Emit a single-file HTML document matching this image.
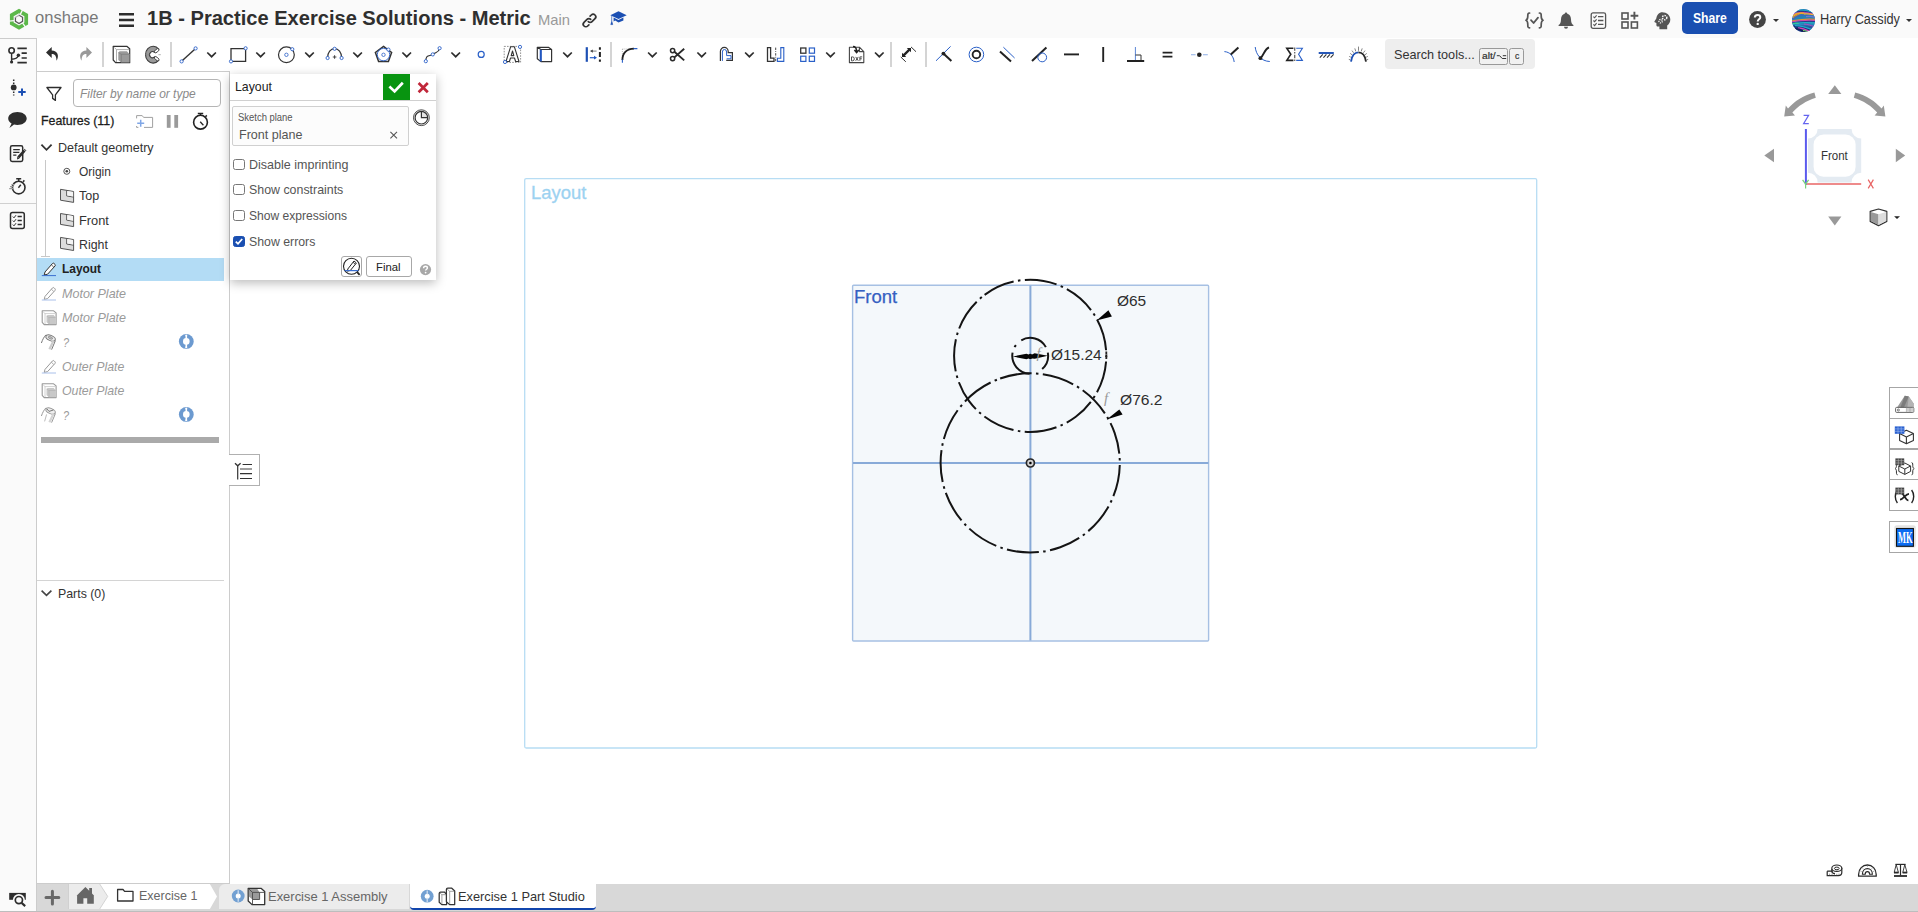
<!DOCTYPE html>
<html><head><meta charset="utf-8"><title>Onshape</title>
<style>
*{box-sizing:border-box;margin:0;padding:0}
html,body{width:1918px;height:912px;overflow:hidden;background:#fff}
body{font-family:"Liberation Sans",sans-serif;position:relative;color:#333}
.a{position:absolute}
.t{position:absolute;white-space:nowrap;transform-origin:0 50%;line-height:1}
svg{position:absolute;overflow:visible}
#hdr{left:0;top:0;width:1918px;height:38px;background:#fafafa}
#tb{left:37px;top:38px;width:1881px;height:34px;background:#fff}
#rail{left:0;top:38px;width:37px;height:874px;background:#fafafa;border-right:1px solid #ccc;border-top:1px solid #ccc}
#panel{left:36px;top:71px;width:194px;height:813px;background:#fff;border:1px solid #ccc}
#bbar{left:37px;top:884px;width:1881px;height:28px;background:#d8d8d8}
#bline{left:0;top:910.5px;width:1918px;height:1.5px;background:#bdbdbd}
.sep{position:absolute;top:42px;width:2px;height:25px;background:#d4d4d4}
#share{left:1682px;top:2px;width:56px;height:32px;background:#1a4fb1;border-radius:5px}
#sbox{left:1385.2px;top:39.2px;width:149.6px;height:29.5px;background:#eee;border-radius:4px}
.key{position:absolute;top:47.6px;height:17.2px;border:1.2px solid #999;border-radius:2.5px;background:#f1f1f1}
#finp{left:73px;top:79px;width:148px;height:28px;border:1px solid #b5b5b5;border-radius:4px;background:#fff}
#selrow{left:37px;top:258px;width:187px;height:23px;background:#b3dcf5}
#gbar{left:41px;top:437px;width:178px;height:6px;background:#aaa}
#phr{left:37px;top:580px;width:187px;height:1px;background:#d4d4d4}
#collapse{left:229px;top:454.2px;width:31px;height:31.6px;background:#fff;border:1px solid #b0b0b0;border-left:none}
#dlg{left:230px;top:73.5px;width:206.4px;height:206px;background:#fff;box-shadow:0 3px 10px rgba(0,0,0,.27)}
#dlghr{left:230px;top:100px;width:206.4px;height:1px;background:#d0d0d0}
#ok{left:383px;top:73.8px;width:27px;height:26.2px;background:#089410}
#skbox{left:232px;top:106px;width:177px;height:40px;border:1px solid #d0d0d0;background:#fcfcfc;border-radius:2px}
.cb{position:absolute;left:233px;width:12px;height:11.4px;border:1px solid #777;border-radius:2.5px;background:#fff}
.btn{position:absolute;top:256px;height:21px;border:1px solid #a8a8a8;border-radius:3px;background:#fff}
#lbox{left:524px;top:178px;width:1013px;height:570px;border:1px solid #b3d8ee}
#fplane{left:852px;top:285px;width:357px;height:357px;border:1px solid #8eb0de;background:#f3f7fb}
#rp1{left:1889px;top:387px;width:32px;height:124px;border:1px solid #a6a6a6;background:#fff}
#rp2{left:1889px;top:520.6px;width:32px;height:32px;border:1px solid #a6a6a6;background:#fff}
.rpd{position:absolute;left:1889px;width:30px;height:1px;background:#a6a6a6}
#tabplus{left:37px;top:884px;width:31px;height:26px;background:#d8d8d8}
#tabhome{left:67.7px;top:884px;width:40px;height:25px;background:#ececec;border-left:1px solid #d0d0d0}
#tab2{left:218.8px;top:884px;width:190.2px;height:25px;background:#ececec;border-radius:6px 0 0 0}
#tab3{left:409.6px;top:884px;width:186.2px;height:26px;background:#fff;border-bottom:2px solid #1145ad;border-radius:0 0 4px 4px}
</style></head>
<body>
<div id="hdr" class="a"></div>
<div id="tb" class="a"></div>
<div id="rail" class="a"></div>
<div class="a" style="left:0;top:203px;width:36px;height:1px;background:#d0d0d0"></div>
<div id="panel" class="a"></div>
<div id="bbar" class="a"></div>
<!-- header -->
<div id="share" class="a"></div>
<div id="sbox" class="a"></div>
<div class="key" style="left:1479px;width:29.4px"></div>
<div class="key" style="left:1509.3px;width:15px"></div>
<!-- onshape logo -->
<svg style="left:0;top:0" width="40" height="38" viewBox="0 0 40 38">
 <polygon points="19.00,8.85 28.09,14.10 28.09,24.60 19.00,29.85 9.91,24.60 9.91,14.10" fill="#5cb84a"/>
 <polygon points="19.00,13.15 24.37,16.25 24.37,22.45 19.00,25.55 13.63,22.45 13.63,16.25" fill="#fafafa"/>
 <g stroke="#fafafa" stroke-width="1.3">
  <path d="M22.6 9.6 L20.2 14.6"/>
  <path d="M22.6 9.6 L20.2 14.6" transform="rotate(120 19.0 19.35)"/>
  <path d="M22.6 9.6 L20.2 14.6" transform="rotate(240 19.0 19.35)"/>
 </g>
 <polygon points="19.00,15.25 22.55,17.30 22.55,21.40 19.00,23.45 15.45,21.40 15.45,17.30" fill="none" stroke="#5a5a5a" stroke-width="1.25"/>
 <path d="M19 15.2 L15.4 17.3" stroke="#fafafa" stroke-width="1.6"/>
 <path d="M15.4 17.4 L19 15.4" stroke="#8a8a8a" stroke-width=".8"/>
</svg>
<!-- hamburger -->
<svg style="left:119px;top:13px" width="15" height="14" viewBox="0 0 15 14"><path d="M0 1.3H15M0 7H15M0 12.7H15" stroke="#2d2d2d" stroke-width="2.5"/></svg>
<!-- link -->
<svg style="left:582px;top:13px" width="15" height="15" viewBox="0 0 15 15" fill="none" stroke="#333" stroke-width="1.7" stroke-linecap="round">
 <path d="M6.3 8.7 a2.6 2.6 0 0 0 3.7 0 l3-3 a2.6 2.6 0 0 0 -3.7 -3.7 l-1.2 1.2"/>
 <path d="M8.7 6.3 a2.6 2.6 0 0 0 -3.7 0 l-3 3 a2.6 2.6 0 0 0 3.7 3.7 l1.2 -1.2"/>
</svg>
<!-- grad cap -->
<svg style="left:610px;top:11px" width="17" height="15" viewBox="0 0 17 15">
 <path d="M8.5 .3 L16.7 4.2 L8.5 8.1 L.3 4.2 Z" fill="#1b4fb3"/>
 <path d="M3.6 6.6 V10.4 L5.2 9.4 L8.5 11.6 L13.4 9.6 V6.6 L8.5 9 Z" fill="#1b4fb3"/>
 <path d="M1.7 5 V10.5 L.8 13.6 H2.7 L1.9 10.5" fill="#1b4fb3" stroke="#1b4fb3" stroke-width=".6"/>
</svg>
<!-- {check} -->
<svg style="left:1525px;top:12px" width="19" height="17" viewBox="0 0 19 17" fill="none" stroke="#555" stroke-width="1.7" stroke-linecap="round" stroke-linejoin="round">
 <path d="M4.6 1 C2.6 1 2.8 2.4 2.8 4 C2.8 6.4 2.6 7.8 .9 8.3 C2.6 8.8 2.8 10.2 2.8 12.6 C2.8 14.4 2.6 15.8 4.6 15.8"/>
 <path d="M14.4 1 C16.4 1 16.2 2.4 16.2 4 C16.2 6.4 16.4 7.8 18.1 8.3 C16.4 8.8 16.2 10.2 16.2 12.6 C16.2 14.4 16.4 15.8 14.4 15.8"/>
 <path d="M6 8.2 L8.6 11 L13 5.6" stroke-width="1.8"/>
</svg>
<!-- bell -->
<svg style="left:1558px;top:12px" width="16" height="17" viewBox="0 0 16 17">
 <path d="M8 .4 C8.8 .4 9.3 1 9.3 1.7 C11.8 2.4 13 4.6 13 7.2 C13 10.4 13.8 11.8 15.4 13.1 V13.9 H.6 V13.1 C2.2 11.8 3 10.4 3 7.2 C3 4.6 4.2 2.4 6.7 1.7 C6.7 1 7.2 .4 8 .4 Z" fill="#555"/>
 <path d="M6 14.8 H10 A2 2 0 0 1 6 14.8Z" fill="#555"/>
</svg>
<!-- checklist -->
<svg style="left:1590px;top:12px" width="17" height="17" viewBox="0 0 17 17" fill="none" stroke="#555" stroke-width="1.3">
 <rect x="1.2" y=".9" width="14.4" height="15.4" rx="1.8"/>
 <path d="M8 4.6H13.4M8 8.5H13.4M8 12.4H13.4" stroke-width="1.4"/>
 <path d="M3.4 4.6L4.6 5.8L6.6 3.4M3.4 8.5L4.6 9.7L6.6 7.3M3.4 12.4L4.6 13.6L6.6 11.2" stroke-width="1.1"/>
</svg>
<!-- grid plus -->
<svg style="left:1621px;top:11px" width="18" height="18" viewBox="0 0 18 18" fill="none" stroke="#555" stroke-width="1.6">
 <rect x="1" y="2" width="6" height="6"/><rect x="1" y="11" width="6" height="6"/><rect x="10.4" y="11" width="6" height="6"/>
 <path d="M13.4 .8V8.6M9.6 4.7H17.3" stroke-width="1.9"/>
</svg>
<!-- head gears -->
<svg style="left:1654px;top:12px" width="17" height="18" viewBox="0 0 17 18">
 <path d="M8.3 .3 C12.8 .3 16.3 3.5 16.3 7.6 C16.3 10.4 14.9 12.3 13.2 13.6 V17.3 H5.4 V14.6 H4 C3 14.6 2.4 14 2.4 13 V11 L.7 10.2 C.3 10 .3 9.6 .5 9.3 L2.3 6.6 C2.7 2.8 5.2 .3 8.3 .3 Z" fill="#555"/>
 <circle cx="10.6" cy="5.6" r="2.2" fill="none" stroke="#fafafa" stroke-width="1.5" stroke-dasharray="1.3 1"/>
 <circle cx="6.6" cy="9.2" r="1.7" fill="none" stroke="#fafafa" stroke-width="1.3" stroke-dasharray="1.1 .9"/>
</svg>
<!-- help -->
<svg style="left:1749px;top:11px" width="17" height="17" viewBox="0 0 17 17"><circle cx="8.5" cy="8.5" r="8.4" fill="#444"/><path d="M5.8 6.6 C5.8 4.9 7 3.9 8.6 3.9 C10.2 3.9 11.3 4.9 11.3 6.3 C11.3 8.3 8.7 8.3 8.7 10.4" fill="none" stroke="#fafafa" stroke-width="2"/><circle cx="8.7" cy="12.9" r="1.2" fill="#fafafa"/></svg>
<svg style="left:1773px;top:19px" width="6" height="3" viewBox="0 0 6 3"><path d="M0 0H6L3 3Z" fill="#333"/></svg>
<svg style="left:1906px;top:19px" width="6" height="3" viewBox="0 0 6 3"><path d="M0 0H6L3 3Z" fill="#333"/></svg>
<!-- avatar -->
<svg style="left:1792px;top:8.9px" width="23" height="23" viewBox="0 0 23 23">
 <defs><clipPath id="avc"><circle cx="11.5" cy="11.5" r="11.5"/></clipPath>
 <linearGradient id="avg" x1="0" y1="0" x2="0" y2="1"><stop offset="0" stop-color="#2d6fb0"/><stop offset=".5" stop-color="#2f7fb6"/><stop offset="1" stop-color="#1c3c8c"/></linearGradient></defs>
 <g clip-path="url(#avc)" fill="none">
  <rect width="23" height="23" fill="url(#avg)"/>
  <path d="M2 2.2 C8 0 14 1 21 3.4" stroke="#1aa0c4" stroke-width="1.6"/>
  <path d="M5 2.8 C10 1.8 15 2.4 20 4.2" stroke="#3a2c7c" stroke-width="1"/>
  <path d="M1 5.2 C7 3 15 3.4 22 5.4" stroke="#d648b4" stroke-width="1.3"/>
  <path d="M0 7.6 C4 4.4 8 3.6 12 4.4" stroke="#f0a828" stroke-width="1.7"/>
  <path d="M12 5 C16 4.6 19 5 22 6" stroke="#f2b830" stroke-width="1.3"/>
  <path d="M0 10 C5 6 12 5.6 23 7.4" stroke="#3e68b8" stroke-width="1.4"/>
  <path d="M1 9 C3 7 5 6 7 5.4" stroke="#e08a2a" stroke-width=".9"/>
  <path d="M4 9.6 C10 7 17 7 23 8.6" stroke="#1f86b8" stroke-width="1.6"/>
  <path d="M14 7.6 C18 7 21 7.6 23 8.4" stroke="#6a78d0" stroke-width="1.2"/>
  <path d="M0 11.8 C7 10.6 15 9.4 23 10.4" stroke="#e09a2c" stroke-width="1.1"/>
  <path d="M0 12.8 C7 11.8 15 10.6 23 11.4" stroke="#d04aa8" stroke-width="1.2"/>
  <path d="M0 14 C7 13 15 11.8 23 12.6" stroke="#2a3a8c" stroke-width="1"/>
  <path d="M0 15.4 C6 12.8 14 13.4 23 14" stroke="#1fb0c8" stroke-width="1.5"/>
  <path d="M1 14.6 C3 14 5 14.2 7 15" stroke="#30c89a" stroke-width="1.5"/>
  <path d="M0 17 C7 14.6 14 15.6 23 16" stroke="#2a88c0" stroke-width="1.5"/>
  <path d="M12 15 C16 15.4 19 16.4 22 17.6" stroke="#b04ac0" stroke-width="1"/>
  <path d="M1 17.6 C6 17 12 19 18 21.6" stroke="#1a2a70" stroke-width="2"/>
  <path d="M3 16.6 C9 16.6 14 18.2 20 20.6" stroke="#1ea8cc" stroke-width="1.3"/>
  <path d="M6 18.8 C10 19 14 20.4 18 22.4" stroke="#d048b8" stroke-width="1.2"/>
  <path d="M3 19.6 C7 20 10 21.4 13 23" stroke="#141c58" stroke-width="1.8"/>
  <path d="M11 21.6 C13 21.6 15 22.2 16 23" stroke="#8ae060" stroke-width="1"/>
 </g>
</svg>

<!-- toolbar separators -->
<div class="sep" style="left:102px"></div>
<div class="sep" style="left:170px"></div>
<div class="sep" style="left:610px"></div>
<div class="sep" style="left:890px"></div>
<div class="sep" style="left:925px"></div>
<!-- toolbar icons: one big svg in page coords -->
<svg style="left:0;top:38px" width="1400" height="34" viewBox="0 38 1400 34">
<defs>
 <path id="chev" d="M.4 .1 L4.7 4.3 L9 .1" fill="none" stroke="#2e2e2e" stroke-width="1.7"/>
 <circle id="bp" r="1.6" fill="#fff" stroke="#2a60c8" stroke-width=".9"/>
</defs>
<!-- undo / redo -->
<path d="M51.7 46.9 L46 52.4 L51.7 57.9 V54.1 C54.6 54.1 56.4 55.4 56.5 60.8 C59.6 55.6 57.6 50.6 51.7 50.4 Z" fill="#2e2e2e"/>
<path d="M86.4 46.9 L92 52.4 L86.4 57.9 V54.1 C83.5 54.1 81.7 55.4 81.6 60.8 C78.5 55.6 80.5 50.6 86.4 50.4 Z" fill="#999"/>
<!-- extrude cube -->
<path d="M113.2 46.3 H126.8 L129.7 48.8 V62.7 H115.6 L113.2 60 Z" fill="#fff" stroke="#333" stroke-width="1.2" stroke-linejoin="round"/>
<path d="M114.4 47.6 L116.5 49.6 H129.2 M116.5 49.6 V62" fill="none" stroke="#9a9a9a" stroke-width=".8"/>
<path d="M118.3 52.5 L119.6 51.3 H126.9 L129.5 54.3 V62.4 H121.3 L118.3 60 Z" fill="#9a9a9a"/>
<path d="M121.3 54.3 H129.4 M121.3 54.3 V62.4 M118.5 52.6 L121.3 54.3" fill="none" stroke="#7c7c7c" stroke-width=".7"/>
<!-- revolve -->
<path d="M158.7 49 A7.6 8.4 0 1 0 158.7 60.4 L154.6 56.9 A3 3 0 1 1 154.6 52.5 Z" fill="#999" stroke="#3c3c3c" stroke-width="1.1" stroke-linejoin="round"/>
<ellipse cx="156.7" cy="50.7" rx="2.8" ry="1.4" transform="rotate(-40 156.7 50.7)" fill="#fff" stroke="#3c3c3c" stroke-width=".9"/>
<ellipse cx="156.7" cy="58.7" rx="2.8" ry="1.4" transform="rotate(40 156.7 58.7)" fill="#fff" stroke="#3c3c3c" stroke-width=".9"/>
<path d="M158.4 54.7 H160.8" stroke="#aaa" stroke-width=".9"/>
<path d="M145 54.7 H149.6" stroke="#8a8a8a" stroke-width=".6"/>
<!-- line -->
<path d="M182.4 60.6 L194.8 49.2" stroke="#333" stroke-width="1.4"/>
<use href="#bp" x="181.6" y="61.4"/><use href="#bp" x="195.6" y="48.4"/>
<use href="#chev" x="206.9" y="52.4"/>
<!-- rectangle -->
<path d="M231 48.6 H245.6 V61.4 H231 Z" fill="none" stroke="#333" stroke-width="1.3"/>
<use href="#bp" x="245.6" y="48.3"/><use href="#bp" x="231" y="61.4"/>
<use href="#chev" x="255.9" y="52.4"/>
<!-- circle -->
<circle cx="286.4" cy="54.8" r="7.9" fill="none" stroke="#333" stroke-width="1.2"/>
<circle cx="286.4" cy="54.8" r="1.7" fill="none" stroke="#2a60c8" stroke-width=".8"/>
<use href="#bp" x="292.3" y="49.2"/>
<use href="#chev" x="304.8" y="52.4"/>
<!-- arc -->
<path d="M327.6 57.6 A7 9 0 0 1 341.6 57.6" fill="none" stroke="#333" stroke-width="1.2"/>
<path d="M334.6 55.2 V58.8 M332.8 57 H336.4" stroke="#333" stroke-width=".9"/>
<use href="#bp" x="327.6" y="58"/><use href="#bp" x="341.6" y="58"/><use href="#bp" x="334.6" y="48.8"/>
<use href="#chev" x="352.9" y="52.4"/>
<!-- polygon -->
<path d="M383.5 46.4 L391.6 52.4 L388.4 61.4 H378.6 L375.4 52.4 Z" fill="none" stroke="#333" stroke-width="1.5"/>
<circle cx="383.5" cy="54.6" r="6.2" fill="none" stroke="#2a60c8" stroke-width=".9"/>
<circle cx="383.5" cy="54.8" r="1.7" fill="none" stroke="#2a60c8" stroke-width=".8"/>
<use href="#bp" x="388.4" y="49.6"/>
<use href="#chev" x="402" y="52.4"/>
<!-- spline -->
<path d="M425.8 61 C425.8 54 430 56.6 432.8 54.4 C436 52 438.4 53 439.6 48.6" fill="none" stroke="#333" stroke-width="1.2"/>
<use href="#bp" x="425.8" y="61.2"/><use href="#bp" x="432.8" y="54.4"/><use href="#bp" x="439.6" y="48.2"/>
<use href="#chev" x="451" y="52.4"/>
<!-- point -->
<circle cx="481.2" cy="54.4" r="3" fill="none" stroke="#2a60c8" stroke-width="1.2"/>
<!-- text -->
<rect x="504.2" y="46.4" width="16.4" height="16" fill="none" stroke="#777" stroke-width=".8" stroke-dasharray="1.6 1.2"/>
<path d="M506 61.5 L510.6 46.8 H514.4 L519 61.5 H515.6 L514.5 58 H510.5 L509.4 61.5 Z M511.2 55.6 H513.8 L512.5 51 Z" fill="#fff" stroke="#333" stroke-width="1.1" stroke-linejoin="round"/>
<use href="#bp" x="520" y="46.9"/><use href="#bp" x="505" y="62"/>
<!-- use / convert -->
<path d="M537.3 47.3 H548.4 L551.6 49.5 V61.6 H540.9 L537.3 58.8 Z M537.3 47.3 L540.9 49.5 H551.6" fill="none" stroke="#333" stroke-width="1.2" stroke-linejoin="round"/>
<path d="M540.8 49.8 V61.4" stroke="#2257c0" stroke-width="2.1"/>
<use href="#chev" x="562.8" y="52.4"/>
<!-- transform/mirror-ish -->
<path d="M586.8 47.2 V61.8" stroke="#1d50b4" stroke-width="2.2"/>
<path d="M599.9 47.2 V49.8 M599.9 52 V57 M599.9 59.4 V61.8" stroke="#222" stroke-width="2"/>
<path d="M596.6 51.1 H591.4" fill="none" stroke="#888" stroke-width="1.1"/><path d="M590 51.1 L592.8 49.4 V52.8 Z" fill="#444"/>
<path d="M589.8 57.7 H595.4" fill="none" stroke="#2a60c8" stroke-width="1.2"/><path d="M597 57.7 L594 55.8 V59.6 Z" fill="#2257c0"/>
<!-- fillet -->
<path d="M622.4 49 H634 M622.4 49 V60" fill="none" stroke="#999" stroke-width=".7" stroke-dasharray="1 1"/>
<path d="M622.4 60 C622.4 53 627 48.6 634 48.6" fill="none" stroke="#222" stroke-width="1.9"/>
<path d="M622.4 59.6 V62.8 M633.6 48.6 H637.4" stroke="#2a60c8" stroke-width="1.1"/>
<use href="#chev" x="647.7" y="52.4"/>
<!-- trim scissors -->
<g fill="none" stroke="#2a2a2a" stroke-width="1.5">
 <circle cx="672.6" cy="50.6" r="2.1"/><circle cx="672.6" cy="58.6" r="2.1"/>
 <path d="M674.4 51.8 L684.2 60.4 M674.4 57.4 L684.2 48.8" stroke-width="1.9"/>
</g>
<use href="#chev" x="697" y="52.4"/>
<!-- offset -->
<path d="M720.4 60.9 V51.6 A3.9 4.3 0 0 1 728.2 51.6 V52.6 H732.4 V60.4 H726.2" fill="none" stroke="#333" stroke-width="1.2"/>
<path d="M722.4 60.9 V52 A2.1 2.5 0 0 1 726.6 52 V55.6 H731 V58.8 H726.6" fill="none" stroke="#2a60c8" stroke-width="1"/>
<use href="#chev" x="744.7" y="52.4"/>
<!-- mirror -->
<path d="M767.5 47.6 H770.6 V58.2 H774 V61.4 H767.5 Z" fill="none" stroke="#333" stroke-width="1.3"/>
<path d="M775.7 47.6 V62.2" stroke="#333" stroke-width=".9" stroke-dasharray="2.4 1.2 .8 1.2"/>
<path d="M783.8 47.6 H780.8 V58.2 H777.4 V61.4 H783.8 Z" fill="none" stroke="#2a60c8" stroke-width="1.1"/>
<!-- pattern -->
<rect x="800.7" y="48" width="5.2" height="5.2" fill="none" stroke="#333" stroke-width="1.3"/>
<rect x="809.3" y="48" width="5.2" height="5.2" fill="none" stroke="#2a60c8" stroke-width="1.2"/>
<rect x="800.7" y="56.2" width="5.2" height="5.2" fill="none" stroke="#2a60c8" stroke-width="1.2"/>
<rect x="809.3" y="56.2" width="5.2" height="5.2" fill="none" stroke="#2a60c8" stroke-width="1.2"/>
<use href="#chev" x="825.8" y="52.4"/>
<!-- dxf -->
<path d="M849.4 47.2 H859.4 L863.8 51.6 V62.6 H849.4 Z M859.4 47.2 V51.6 H863.8" fill="#fff" stroke="#444" stroke-width="1.1" stroke-linejoin="round"/>
<path d="M853 46.4 C856.4 46.4 856.6 48.6 856.6 51.4 M854.4 50 L856.6 52.6 L858.8 50" fill="none" stroke="#222" stroke-width="1.5"/>
<path d="M851.5 56.9 V60.8 H852.6 Q854.3 60.8 854.3 58.85 Q854.3 56.9 852.6 56.9 Z M855.7 56.9 L858.3 60.8 M858.3 56.9 L855.7 60.8 M859.9 60.8 V56.9 H862.2 M859.9 58.8 H861.8" fill="none" stroke="#444" stroke-width=".95"/>
<use href="#chev" x="874.6" y="52.4"/>
<!-- dimension -->
<path d="M903.6 55.4 L909.4 49.6" stroke="#222" stroke-width="2.3"/>
<path d="M902 52.8 V57 H906.2 Z M911 52.2 V48 H906.8 Z" fill="#222"/>
<path d="M911 46.9 L916 51.7 M900.8 57 L905.8 61.8" stroke="#333" stroke-width="1"/>
<!-- coincident -->
<path d="M936 60.8 L950.6 46.4" stroke="#2a60c8" stroke-width="1"/>
<path d="M943.4 53.6 L951.4 61" stroke="#222" stroke-width="2"/>
<circle cx="943.4" cy="53.6" r="1.9" fill="#222"/>
<!-- concentric -->
<circle cx="976.4" cy="54.5" r="7.3" fill="none" stroke="#2a60c8" stroke-width="1"/>
<circle cx="976.4" cy="54.5" r="3.8" fill="none" stroke="#222" stroke-width="1.9"/>
<!-- parallel -->
<path d="M1000 51.4 L1011 61.6" stroke="#222" stroke-width="2"/>
<path d="M1003.4 47.2 L1014.6 58" stroke="#2a60c8" stroke-width="1"/>
<!-- tangent -->
<path d="M1032 61 L1046.4 47.4" stroke="#222" stroke-width="2"/>
<circle cx="1042.2" cy="57.4" r="4.4" fill="none" stroke="#2a60c8" stroke-width="1"/>
<!-- horizontal / vertical -->
<path d="M1064 54.4 H1079" stroke="#222" stroke-width="1.9"/>
<path d="M1103.2 47 V62" stroke="#222" stroke-width="1.9"/>
<!-- perpendicular -->
<path d="M1127 61 H1144.2" stroke="#222" stroke-width="2"/>
<path d="M1135.4 47 V60" stroke="#5b86d6" stroke-width="1"/>
<path d="M1135.4 55 H1141 V60" fill="none" stroke="#333" stroke-width="1"/>
<!-- equal -->
<path d="M1162.6 52.6 H1172.4 M1162.6 56.6 H1172.4" stroke="#222" stroke-width="1.8"/>
<!-- midpoint -->
<path d="M1191 54.8 H1195.6 M1203 54.8 H1207.8" stroke="#8fb0e8" stroke-width="1.1"/>
<circle cx="1199.3" cy="54.8" r="2.3" fill="#222"/>
<!-- normal -->
<path d="M1224.4 51.6 C1230 52 1233.4 56 1234.2 62" fill="none" stroke="#2a60c8" stroke-width="1"/>
<path d="M1230.8 54.6 L1238.4 47.4" stroke="#222" stroke-width="2"/>
<!-- pierce -->
<path d="M1255.2 47 C1256 54.6 1261 61.2 1269.8 61.5" fill="none" stroke="#2a60c8" stroke-width="1"/>
<path d="M1260.4 58.2 C1264.4 54.6 1264.4 49 1269 47.4" fill="none" stroke="#222" stroke-width="2"/>
<circle cx="1260.4" cy="58.2" r="1.9" fill="#222"/>
<!-- symmetric -->
<path d="M1293.4 48.2 H1286.8 L1290.8 54.2 L1286.8 60.4 H1293.4" fill="none" stroke="#222" stroke-width="1.6"/>
<path d="M1296.2 48.2 H1302.4 L1298.6 54.2 L1302.4 60.4 H1296.2" fill="none" stroke="#2a60c8" stroke-width="1.1"/>
<path d="M1294.7 47.4 V62" stroke="#666" stroke-width="1.3" stroke-dasharray="3.4 1.2 1.6 1.2"/>
<!-- fix -->
<path d="M1318.7 53 H1333.8" stroke="#1d50b4" stroke-width="1.9"/>
<path d="M1322.8 54.4 L1319.8 57.6 M1326.4 54.4 L1323.4 57.6 M1330 54.4 L1327 57.6 M1333.6 54.4 L1330.6 57.6" stroke="#333" stroke-width="1.1"/>
<!-- curvature -->
<g stroke="#777" stroke-width=".9">
<path d="M1350.2 59.8 L1348.8 59.4 M1350.8 57.2 L1349.2 56.4 M1352 54.8 L1350.2 53.4 M1353.6 52.8 L1352 50.6 M1355.8 51.4 L1354.8 48.4 M1358.5 50.8 V46.6 M1361.2 51.4 L1362.2 48.4 M1363.4 52.8 L1365 50.6 M1365 54.8 L1366.8 53.4 M1366.2 57.2 L1367.8 56.4 M1366.8 59.8 L1368.2 59.4"/>
</g>
<path d="M1351 61.6 C1352 55 1355 52.4 1358.5 52.4" fill="none" stroke="#1d50b4" stroke-width="1.9"/>
<path d="M1358.5 52.4 C1362 52.4 1365 55 1366 61.6" fill="none" stroke="#2a2a2a" stroke-width="1.9"/>
</svg>
<svg style="left:1495px;top:54px" width="13" height="6" viewBox="1495 54 13 6"><path d="M1496.8 55.7 H1499.6 L1502.2 58.5 H1506.2 M1502.8 55.7 H1506.2" fill="none" stroke="#333" stroke-width="1"/></svg>

<svg style="left:0;top:38px" width="36" height="200" viewBox="0 38 36 200">
<g fill="none" stroke="#2d2d2d" stroke-width="1.6">
 <!-- feature list -->
 <circle cx="11.6" cy="50.5" r="2.7"/>
 <path d="M11.6 53.2 V61.6 M11.6 59.2 C16 59 17.6 58 18.2 55.6" stroke-width="1.4"/>
 <circle cx="11.6" cy="62" r="1.6" fill="#2d2d2d" stroke="none"/><circle cx="18.4" cy="55.2" r="1.7" fill="#2d2d2d" stroke="none"/>
 <path d="M17.4 48.4 H26.8 M21.6 53.2 H26.8 M21.6 58 H26.8 M17.4 62.7 H26.8" stroke-width="1.7"/>
 <!-- insert -->
 <path d="M13.7 79.4 V95.4" stroke-width="1.5" stroke-dasharray="1.5 1.5"/>
 <circle cx="13.7" cy="87.4" r="2.9" fill="#2d2d2d" stroke="none"/>
 <path d="M22 88.4 V95.8 M18.3 92.1 H25.7" stroke="#1b4fb3" stroke-width="2"/>
 <!-- comment -->
 <path d="M17.4 111.9 C22.6 111.9 26.7 114.8 26.7 118.4 C26.7 122 22.6 124.9 17.4 124.9 C16.2 124.9 15 124.7 14 124.4 L9.4 128 L11.6 123.4 C9.4 122.2 8.2 120.4 8.2 118.4 C8.2 114.8 12.2 111.9 17.4 111.9 Z" fill="#2d2d2d" stroke="none"/>
 <!-- note edit -->
 <rect x="10.5" y="145.8" width="12.2" height="15.6" rx="1.6" stroke-width="1.5"/>
 <path d="M13.2 149.6 H19.8 M13.2 152.4 H19.4 M13.2 155.2 H16.4" stroke-width="1.3"/>
 <path d="M25.4 149.6 L18.4 157.4" stroke="#2d2d2d" stroke-width="2.8"/>
 <path d="M17 159.4 L17.4 156.4 L19.6 158.4 Z" fill="#2d2d2d" stroke="none"/>
 <path d="M23.4 149.2 L26 151.6" stroke="#fafafa" stroke-width=".7"/>
 <!-- stopwatch -->
 <circle cx="18.7" cy="187.6" r="6.3" stroke-width="1.6"/>
 <path d="M16.2 178.7 H21.2 M18.7 178.7 V181.2 M23 181.8 L24.4 180.4" stroke-width="1.5"/>
 <path d="M18.4 187.8 L20.8 184.8" stroke-width="1.4"/>
 <path d="M11.4 184.6 H14.2 M10 186.6 H13.4 M9.2 188.6 H13" stroke="#9a9a9a" stroke-width="1.3"/>
 <!-- checklist -->
 <rect x="10.5" y="212.4" width="13.8" height="16" rx="2" stroke-width="1.5"/>
 <path d="M17.6 216.6 H21.8 M17.6 220.6 H21.8 M17.6 224.6 H21.8" stroke-width="1.5"/>
 <path d="M12.8 216.6 L14 217.8 L16 215.2 M12.8 220.6 L14 221.8 L16 219.2 M12.8 224.6 L14 225.8 L16 223.2" stroke-width="1"/>
</g>
</svg>
<!-- bottom-left search icon -->
<svg style="left:7px;top:891px" width="22" height="17" viewBox="7 891 22 17">
 <rect x="9.2" y="892.9" width="16.6" height="6.9" fill="#2d2d2d"/>
 <circle cx="18.9" cy="900.1" r="6" fill="#fafafa"/>
 <circle cx="18.9" cy="900.1" r="3.6" fill="#fafafa" stroke="#2d2d2d" stroke-width="1.7"/>
 <path d="M21.6 902.9 L25.2 906.1" stroke="#2d2d2d" stroke-width="2.1"/>
</svg>

<!-- feature panel -->
<div id="finp" class="a"></div>
<div class="a" style="left:45px;top:160px;width:1px;height:97px;background:#c8c8c8"></div>
<div class="a" style="left:41px;top:256px;width:9px;height:1px;background:#c8c8c8"></div>
<div id="selrow" class="a"></div>
<div id="gbar" class="a"></div>
<div id="phr" class="a"></div>
<div id="collapse" class="a"></div>
<svg style="left:37px;top:72px" width="192" height="380" viewBox="37 72 192 380">
<defs>
 <g id="plane"><path d="M0 0 L13.1 2.2 V13.1 L0 10.9 Z" fill="#dcdcdc" stroke="#555" stroke-width="1"/><path d="M6.2 1 V6.6 L13.1 7.8" fill="none" stroke="#555" stroke-width="1"/><path d="M6.7 1.6 L12.6 2.6 V7.2 L6.7 6.2 Z" fill="#f4f4f4"/></g>
 <g id="pencil"><path d="M3.4 9.6 L10.8 1.2 A1.2 1.2 0 0 1 12.6 1.2 L13.4 2 A1.2 1.2 0 0 1 13.4 3.6 L6 11.8 L2.6 12.6 Z" fill="#fff" stroke-width="1"/><path d="M9.8 2.4 L12.2 4.8" stroke-width=".8"/></g>
 <g id="excube" fill="none"><path d="M0 0 H11.4 L13.9 2.1 V13.8 H2 L0 11.5 Z" fill="#fff" stroke-width="1.1" stroke-linejoin="round"/><path d="M1 1.1 L2.8 2.8 H13.4 M2.8 2.8 V13.2" stroke="#c4c4c4" stroke-width=".8"/><path d="M4.3 5.2 L5.4 4.2 H11.5 L13.6 6.7 V13.4 H6.8 L4.3 11.5 Z" fill="#c8c8c8" stroke="none"/><path d="M6.8 6.7 H13.5 M6.8 6.7 V13.4 M4.5 5.3 L6.8 6.7" stroke="#b0b0b0" stroke-width=".6"/></g>
 <g id="binfo"><circle r="7.4" fill="#6c9ad0"/><circle r="3.3" fill="#fff"/><path d="M0 -6.6 V-2 M0 6.6 V2" stroke="#fff" stroke-width="1.6"/><circle cy="-5.8" r=".9" fill="#fff"/><circle cy="5.8" r=".9" fill="#fff"/></g>
</defs>
<!-- filter funnel -->
<path d="M46.9 87.5 H61 L55.4 94.8 V100.4 L52.6 98.4 V94.8 Z" fill="none" stroke="#2d2d2d" stroke-width="1.3" stroke-linejoin="round"/>
<!-- folder plus -->
<path d="M136.6 118.4 V115.6 H142.2 L143.6 117.4 H152.6 V127.4 H144" fill="none" stroke="#a0a0a0" stroke-width="1"/>
<path d="M136.6 126 V127.4 H138.4" fill="none" stroke="#a0a0a0" stroke-width="1"/>
<path d="M140.7 119.8 V126.8 M137.2 123.3 H144.2" stroke="#7fa6e6" stroke-width="1.5"/>
<!-- pause -->
<rect x="166.8" y="115" width="3.8" height="12.8" fill="#9a9a9a"/><rect x="174.3" y="115" width="3.8" height="12.8" fill="#9a9a9a"/>
<!-- stopwatch -->
<circle cx="200.5" cy="122.2" r="6.9" fill="none" stroke="#222" stroke-width="1.6"/>
<path d="M197.8 113.6 H203.2 M200.5 113.6 V115.6 M205.4 116.8 L206.8 115.4" stroke="#222" stroke-width="1.5"/>
<path d="M200.2 121.8 L203.4 125.2" stroke="#222" stroke-width="1.3"/>
<!-- chevrons -->
<path d="M41.4 144.6 L46.5 149.8 L51.6 144.6" fill="none" stroke="#333" stroke-width="1.8"/>
<path d="M41.6 590.6 L46.5 595.4 L51.4 590.6" fill="none" stroke="#444" stroke-width="1.6"/>
<!-- origin -->
<circle cx="66.8" cy="171.3" r="3" fill="none" stroke="#555" stroke-width="1"/><circle cx="66.8" cy="171.3" r="1.3" fill="#444"/>
<!-- planes -->
<use href="#plane" x="60.5" y="189.3"/><use href="#plane" x="60.5" y="213.5"/><use href="#plane" x="60.5" y="237.4"/>
<!-- sketch rows -->
<use href="#pencil" x="41.6" y="262.4" stroke="#333"/>
<path d="M41.8 275.6 H56" stroke="#3a6fd0" stroke-width="1"/>
<use href="#pencil" x="41.6" y="286.8" stroke="#999"/>
<path d="M41.8 300 H56" stroke="#a9c0ea" stroke-width="1"/>
<use href="#pencil" x="41.6" y="359.8" stroke="#999"/>
<path d="M41.8 373 H56" stroke="#a9c0ea" stroke-width="1"/>
<!-- extrude rows -->
<use href="#excube" x="42.2" y="310.8" stroke="#999"/>
<use href="#excube" x="42.2" y="383.8" stroke="#999"/>
<!-- hole-ish rows -->
<g fill="none" stroke="#777" stroke-width="1">
 <path d="M41.4 343 C42.6 339.4 44.2 336.6 46 334.8"/>
 <ellipse cx="50.6" cy="338" rx="5" ry="2.6" transform="rotate(24 50.6 338)" fill="#eee"/>
 <ellipse cx="50.4" cy="337.8" rx="2.4" ry="1.1" transform="rotate(24 50.4 337.8)" fill="#bbb" stroke="#888" stroke-width=".7"/>
 <path d="M55.4 340.6 L51.6 349.6" />
 <path d="M53.4 341 L49.4 349.2" stroke="#ccc" stroke-width="2.2"/>
</g>
<g fill="none" stroke="#999" stroke-width="1">
 <path d="M41.4 416 C42.6 412.4 44.2 409.6 46 407.8"/>
 <ellipse cx="50.6" cy="411" rx="5" ry="2.6" transform="rotate(24 50.6 411)" fill="#eee"/>
 <path d="M47 409 L49 411.4 L53.4 410" stroke="#777" stroke-width="1"/>
 <path d="M55.4 413.6 L51.6 422.6" />
 <path d="M53.4 414 L49.4 422.2" stroke="#d4d4d4" stroke-width="2.2"/>
 <path d="M46.6 414.4 L44.6 421.4" stroke="#bbb"/>
</g>
<use href="#binfo" x="186.3" y="341.4"/><use href="#binfo" x="186.3" y="414.4"/>
</svg>
<!-- collapse icon -->
<svg style="left:230px;top:455px" width="30" height="30" viewBox="230 455 30 30" fill="none" stroke="#333" stroke-width="1.2">
 <path d="M235 463.2 L237.7 465.8 L240.6 463.2" stroke-width="1.3"/>
 <path d="M237.7 466 V479.6"/>
 <path d="M242.6 464.5 H252 M240 473.6 H252 M240 478.5 H252"/>
 <path d="M240 469 H252" stroke="#888" stroke-width="1.6"/>
</svg>

<!-- canvas -->
<svg style="left:520px;top:175px" width="1022" height="578" viewBox="520 175 1022 578"><rect x="524.7" y="178.6" width="1012" height="569.4" rx="1.5" fill="none" stroke="#b7ddf4" stroke-width="1.3"/></svg>
<!-- sketch geometry -->
<svg style="left:840px;top:260px" width="400" height="400" viewBox="840 260 400 400">
 <rect x="852.6" y="285.2" width="356" height="355.8" fill="#f4f8fb" stroke="#a6c0e3" stroke-width="1.4" rx="1"/>
 <line x1="1030.4" y1="285.6" x2="1030.4" y2="640.6" stroke="#88aad8" stroke-width="2"/>
 <line x1="853" y1="463" x2="1208.4" y2="463" stroke="#88aad8" stroke-width="2"/>
 <g fill="none" stroke="#141414" stroke-width="2">
  <circle cx="1030.2" cy="355.8" r="76.1" stroke-dasharray="32.17 4.4 2.5 4.4" transform="rotate(-126.8 1030.2 355.8)"/>
  <circle cx="1030.2" cy="462.9" r="89.6" stroke-dasharray="32 4.4 2.5 4.4" transform="rotate(-109.6 1030.2 462.9)"/>
  <path d="M1021.25 340.30 A17.9 17.9 0 0 1 1045.86 347.12 M1014.54 347.12 A17.9 17.9 0 0 1 1015.90 345.03 M1047.83 352.69 A17.9 17.9 0 0 1 1042.18 369.10 M1029.58 373.69 A17.9 17.9 0 0 1 1012.57 352.69"/>
 </g>
 <!-- origin -->
 <circle cx="1030.4" cy="463" r="4" fill="#d2d2d2" stroke="#262626" stroke-width="1.7"/>
 <circle cx="1030.4" cy="463" r="1.3" fill="#000"/>
 <!-- dim arrows -->
 <path d="M1096.6 320.5 L1108.4 310.2 L1111.9 316.6 Z" fill="#050505"/>
 <path d="M1106.7 419.5 L1119.3 409.6 L1122.6 414.5 Z" fill="#050505"/>
 <path d="M1012.8 356.5 L1026.4 353.7 L1028.6 354.4 A2.7 2.7 0 0 1 1032 354.4 L1034.6 353.3 L1047.8 355.8 L1034.8 358.8 L1032 358.4 A2.7 2.7 0 0 1 1028.6 358.4 L1026.4 359.3 Z" fill="#050505"/>
 <rect x="1105.4" y="351.5" width="1.8" height="3" fill="#222"/><rect x="1105.4" y="356" width="1.8" height="3" fill="#222"/>
 <!-- label backgrounds -->
 <rect x="1112" y="291" width="38" height="21" fill="#f1f4f7" opacity=".0"/>
</svg>
<span class="t" style="left:1036.5px;top:345.6px;font-size:15px;font-style:italic;color:#999;font-family:'Liberation Serif',serif">f</span>
<span class="t" style="left:1104px;top:391px;font-size:15px;font-style:italic;color:#999;font-family:'Liberation Serif',serif">f</span>

<!-- dialog -->
<div id="dlg" class="a"></div>
<div id="dlghr" class="a"></div>
<div id="ok" class="a"></div>
<div id="skbox" class="a"></div>
<div class="cb" style="top:158.8px"></div>
<div class="cb" style="top:184px"></div>
<div class="cb" style="top:209.8px"></div>
<div class="cb" style="top:235.8px;background:#1a4fb1;border-color:#1a4fb1"></div>
<div class="btn" style="left:341px;width:21px"></div>
<div class="btn" style="left:366px;width:46px"></div>
<svg style="left:230px;top:72px" width="210" height="210" viewBox="230 72 210 210">
 <!-- check -->
 <path d="M389.4 86.6 L394.6 91.4 L402.8 82.8" fill="none" stroke="#fff" stroke-width="2.7"/>
 <!-- red x -->
 <path d="M418.6 83 L427.8 92.2 M427.8 83 L418.6 92.2" stroke="#c0273a" stroke-width="2.7"/>
 <!-- clock -->
 <circle cx="421.4" cy="117.7" r="7.9" fill="none" stroke="#333" stroke-width=".9"/>
 <path d="M421.4 111.3 A6.4 6.4 0 0 1 427.8 117.7 H421.4 Z" fill="#e4e4e4"/>
 <circle cx="421.4" cy="117.7" r="6.3" fill="none" stroke="#333" stroke-width="1.2"/>
 <path d="M421.4 111.6 V117.7 H427.4" fill="none" stroke="#333" stroke-width="1.2"/>
 <!-- small x -->
 <path d="M390.4 131.8 L397 138.4 M397 131.8 L390.4 138.4" stroke="#555" stroke-width="1.1"/>
 <!-- checked mark -->
 <path d="M235.8 241.6 L238 243.8 L242.2 239" fill="none" stroke="#fff" stroke-width="1.8"/>
 <!-- sketch magnifier icon -->
 <circle cx="351.5" cy="266.3" r="8" fill="none" stroke="#222" stroke-width="1.1"/>
 <path d="M357.2 272.2 L359.6 274.8" stroke="#222" stroke-width="1.8"/>
 <path d="M347.8 269 L354 261 L356.4 263 L350.4 270.4 L347.4 271.2 Z" fill="#fff" stroke="#222" stroke-width="1"/>
 <path d="M353 262.2 L355.4 264.2" stroke="#222" stroke-width=".8"/>
 <path d="M344.6 270.6 H358.4" stroke="#3a6fd0" stroke-width="1.2"/>
 <!-- help -->
 <circle cx="425.5" cy="269.6" r="5.6" fill="#a8a8a8"/>
 <path d="M423.6 268.2 C423.6 266.8 424.4 266.2 425.5 266.2 C426.6 266.2 427.4 266.9 427.4 267.9 C427.4 269.2 425.6 269.2 425.6 270.6" fill="none" stroke="#fff" stroke-width="1.4"/>
 <circle cx="425.6" cy="272.6" r=".9" fill="#fff"/>
</svg>

<svg style="left:1760px;top:80px" width="158" height="150" viewBox="1760 80 158 150">
 <!-- triangles -->
 <path d="M1834.8 85.3 L1841.4 93.9 H1828.2 Z" fill="#999"/>
 <path d="M1834.8 225.6 L1841.4 216.4 H1828.2 Z" fill="#999"/>
 <path d="M1764.3 155.5 L1774 148.8 V162.2 Z" fill="#999"/>
 <path d="M1905.2 155.5 L1895.8 148.8 V162.2 Z" fill="#999"/>
 <!-- curved arrows -->
 <path d="M1814.4 92.4 C1803 95.6 1794.4 101 1788 108.6 L1785.8 105.6 L1784.2 116.4 L1795 115.4 L1792.4 112.6 C1798 106 1806 101 1815.8 97.8 Z" fill="#999"/>
 <path d="M1855.2 92.4 C1866.6 95.6 1875.2 101 1881.6 108.6 L1883.8 105.6 L1885.4 116.4 L1874.6 115.4 L1877.2 112.6 C1871.6 106 1863.6 101 1853.8 97.8 Z" fill="#999"/>
 <!-- cube face -->
 <path d="M1817.6 129 H1851.6 A9.6 9.6 0 0 0 1861.2 138.6 V172.8 A9.6 9.6 0 0 0 1851.6 182.4 H1817.6 A9.6 9.6 0 0 0 1808 172.8 V138.6 A9.6 9.6 0 0 0 1817.6 129 Z" fill="#e4ebf2"/>
 <rect x="1813.6" y="134.6" width="42" height="42.2" rx="10" fill="#fff"/>
 <!-- axes -->
 <path d="M1805.9 184 H1861.2" stroke="#e86464" stroke-width="1.7"/>
 <path d="M1805.9 129 V184.6" stroke="#5a5aee" stroke-width="2"/>
 <path d="M1803.6 115.4 H1808.6 L1803.6 123.6 H1808.8" fill="none" stroke="#6464f0" stroke-width="1.2"/>
 <path d="M1868.2 179.6 L1873.4 188.4 M1873.4 179.6 L1868.2 188.4" fill="none" stroke="#e86464" stroke-width="1.2"/>
 <path d="M1802.6 179.8 L1805.6 184.2 L1808.6 179.8 M1805.6 184.2 V188.6" fill="none" stroke="#7ad27a" stroke-width="1.2"/>
 <!-- small cube -->
 <path d="M1878.5 209 L1886.8 211.3 V221.4 L1878.5 225.6 L1870.2 221.4 V211.3 Z" fill="#fff" stroke="#333" stroke-width="1.2" stroke-linejoin="round"/>
 <path d="M1870.8 212 L1878.5 214.2 V225 L1870.8 221 Z" fill="#999"/>
 <path d="M1886.2 212 L1878.5 214.2 V225 L1886.2 221 Z" fill="#dcdcdc"/>
 <path d="M1894.1 216.2 H1900 L1897 218.9 Z" fill="#222"/>
</svg>

<!-- right panel -->
<div id="rp1" class="a"></div>
<div class="rpd" style="top:418px;left:1890px"></div>
<div class="rpd" style="top:448px;height:2px;left:1890px"></div>
<div class="rpd" style="top:479px;left:1890px"></div>
<div id="rp2" class="a"></div>
<svg style="left:1889px;top:387px" width="29" height="170" viewBox="1889 387 29 170">
 <!-- appearance -->
 <path d="M1897 407.4 L1904.8 395.8 L1908.8 396.6 L1913.6 403.6 V407.4 Z" fill="#9a9a9a"/>
 <path d="M1904.8 395.8 L1908.8 396.6 L1904 407.4 H1900.4 Z" fill="#7c7c7c"/>
 <path d="M1908.8 396.6 L1913.6 403.6 V407.4 H1907.4 Z" fill="#b4b4b4"/>
 <rect x="1895.6" y="407.4" width="18.2" height="5" rx="1" fill="#fff" stroke="#555" stroke-width=".9"/>
 <rect x="1906.6" y="407.9" width="6.8" height="4" fill="#cfcfcf"/>
 <path d="M1906.4 407.6 V412.2 M1910 407.6 V412.2" stroke="#999" stroke-width=".6"/>
 <circle cx="1898.4" cy="410" r="1" fill="none" stroke="#444" stroke-width=".7"/>
 <!-- blue grid + cube -->
 <path d="M1899.6 433.6 L1906.4 430.2 L1913.4 433.6 V440.4 L1906.4 443.8 L1899.6 440.4 Z M1899.6 433.6 L1906.4 437 L1913.4 433.6 M1906.4 437 V443.8" fill="#fff" stroke="#333" stroke-width="1.1" stroke-linejoin="round"/>
 <rect x="1894.8" y="426.4" width="9.6" height="7.4" fill="#2a60d0"/>
 <path d="M1898 426.4 V433.8 M1901.2 426.4 V433.8 M1894.8 428.9 H1904.4 M1894.8 431.3 H1904.4" stroke="#9fbcf0" stroke-width=".6"/>
 <!-- config cube braces -->
 <path d="M1898.8 466 L1904.8 463 L1910.6 466 V471.4 L1904.8 474.4 L1898.8 471.4 Z M1898.8 466 L1904.8 469 L1910.6 466 M1904.8 469 V474.4" fill="#fff" stroke="#333" stroke-width="1" stroke-linejoin="round"/>
 <path d="M1897.6 462.6 C1896 462.6 1896.6 465 1896.4 466.6 C1896.2 468 1895.4 468.4 1895 468.6 C1895.4 468.8 1896.2 469.2 1896.4 470.6 C1896.6 472.4 1896 474.8 1897.6 474.8" fill="none" stroke="#333" stroke-width="1"/>
 <path d="M1911.6 462.6 C1913.2 462.6 1912.6 465 1912.8 466.6 C1913 468 1913.8 468.4 1914.2 468.6 C1913.8 468.8 1913 469.2 1912.8 470.6 C1912.6 472.4 1913.2 474.8 1911.6 474.8" fill="none" stroke="#333" stroke-width="1"/>
 <rect x="1895.4" y="458.4" width="8.8" height="6.8" fill="#444"/>
 <path d="M1898.3 458.4 V465.2 M1901.3 458.4 V465.2 M1895.4 460.7 H1904.2 M1895.4 463 H1904.2" stroke="#bbb" stroke-width=".6"/>
 <!-- variable table -->
 <path d="M1897.4 490 C1894.6 493.6 1894.6 499.4 1897.4 503" fill="none" stroke="#222" stroke-width="1.4"/>
 <path d="M1911.6 490 C1914.4 493.6 1914.4 499.4 1911.6 503" fill="none" stroke="#222" stroke-width="1.4"/>
 <path d="M1900 499.6 C1903.6 499.6 1905.4 493.8 1909 493.8 M1901.4 493.4 C1904 493.4 1905.4 500.4 1908.4 500.4" fill="none" stroke="#222" stroke-width="1.7"/>
 <rect x="1895.4" y="487.6" width="8.8" height="6.8" fill="#444"/>
 <path d="M1898.3 487.6 V494.4 M1901.3 487.6 V494.4 M1895.4 489.9 H1904.2 M1895.4 492.2 H1904.2" stroke="#bbb" stroke-width=".6"/>
 <!-- MK -->
 <rect x="1894.3" y="525.3" width="21.5" height="22.5" rx="2.5" fill="#e4e4e4"/>
 <rect x="1896.5" y="528.5" width="16.9" height="17.8" fill="#0c6cf2" stroke="#141414" stroke-width="1.1"/>
 <text x="1898" y="543" font-family="Liberation Serif" font-weight="700" font-size="17" fill="#fff" textLength="14.6" lengthAdjust="spacingAndGlyphs">MK</text>
</svg>
<!-- bottom-right measure icons -->
<svg style="left:1820px;top:860px" width="95" height="20" viewBox="1820 860 95 20" fill="none" stroke="#2a2a2a">
 <!-- tape -->
 <path d="M1827.2 871.2 H1833 M1827.2 871.2 V875.6 H1838.4 C1840.6 875.6 1841.8 874.4 1841.8 872.6 V867.8" stroke-width="1.2"/>
 <ellipse cx="1836.8" cy="868.2" rx="5" ry="3.2" stroke-width="1.2" fill="#fff"/>
 <ellipse cx="1836.8" cy="868.4" rx="2.4" ry="1.3" stroke-width="1"/>
 <path d="M1831.8 869 V871.4 C1831.8 872.6 1833.4 873.4 1835 873.6" stroke-width="1.1"/>
 <path d="M1829.6 873.6 V875.2 M1832 873.6 V875.2 M1834.4 873.8 V875.2 M1836.8 873.8 V875.2 M1839 873.6 V875" stroke="#777" stroke-width=".7"/>
 <!-- protractor -->
 <path d="M1858.6 876.2 V874.4 C1858.6 869 1862.6 865 1867.4 865 C1872.2 865 1876.2 869 1876.2 874.4 V876.2 Z" stroke-width="1.3" fill="#fff"/>
 <path d="M1862.4 874.2 C1862.4 870.8 1864.6 868.6 1867.4 868.6 C1870.2 868.6 1872.4 870.8 1872.4 874.2 L1869.6 874.2 C1869.6 872.6 1868.8 871.6 1867.4 871.6 C1866 871.6 1865.2 872.6 1865.2 874.2 Z" stroke-width="1.1"/>
 <path d="M1860.4 871 L1861.6 871.6 M1862 867.6 L1863 868.6 M1867.4 865.4 V866.8 M1872.8 867.6 L1871.8 868.6 M1874.4 871 L1873.2 871.6" stroke="#777" stroke-width=".7"/>
 <!-- scales -->
 <path d="M1894 876 H1907" stroke-width="1.8"/>
 <path d="M1900.5 864.2 V875.4" stroke-width="1.2"/>
 <path d="M1895.4 864.4 H1905.6" stroke-width="1.2"/>
 <path d="M1896.2 864.6 L1894.2 872.4 H1898.4 Z M1904.8 864.6 L1902.8 872.4 H1907 Z" stroke-width=".9"/>
 <path d="M1894 872.6 H1898.6 M1902.6 872.6 H1907.2" stroke-width="1.6"/>
</svg>

<!-- tabs -->
<div id="tabplus" class="a"></div>
<div id="tabhome" class="a"></div>
<div id="tab2" class="a"></div>
<div id="tab3" class="a"></div>
<svg style="left:99px;top:884px" width="120" height="26" viewBox="99 884 120 26"><path d="M99.7 884 H209.9 L217 896.4 L209.9 909 H99.7 L107.7 896.4 Z" fill="#fff"/><path d="M99.7 884 L107.7 896.4 L99.7 909" fill="none" stroke="#d4d4d4" stroke-width="1"/></svg>
<svg style="left:37px;top:884px" width="570" height="26" viewBox="37 884 570 26">
<defs><g id="binfo2"><circle r="6.4" fill="#72a0d2"/><circle r="2.5" fill="#fff"/><path d="M0 -5.8 V-1.6 M0 5.8 V1.6" stroke="#d5e3f3" stroke-width="1.2"/></g></defs>
 <!-- plus -->
 <path d="M52.4 891.2 V904 M46 897.6 H58.8" stroke="#686868" stroke-width="3" stroke-linecap="round"/>
 <!-- home -->
 <path d="M85.4 886.9 L89.2 890.7 V888 H92 V893.5 L94.2 895.7 H93.8 V903.8 H87.2 V898.3 H83.4 V903.8 H77.1 V895.7 H76.6 Z" fill="#666"/>
 <!-- folder -->
 <path d="M117.6 901 V889.5 H123 L124.6 891.4 H133 V901 Z" fill="none" stroke="#333" stroke-width="1.3" stroke-linejoin="round"/>
 <!-- assembly tab -->
 <use href="#binfo2" x="238.2" y="896"/>
 <path d="M248.2 888.3 H261 L264.7 891.6 V904.6 H252 L248.2 901 Z" fill="#fff" stroke="#333" stroke-width="1.3" stroke-linejoin="round"/>
 <path d="M248.9 889 H257.4 L259.6 892.4 V899.5 H252.5 L248.9 896.4 Z" fill="#9a9a9a"/>
 <path d="M248.9 889 L252.5 892.4 H259.6 M252.5 892.4 V899.5 M252.5 899.5 H259.6 V892.4 M259.6 892.4 H264.4 M252.5 899.5 V904.4" fill="none" stroke="#4a4a4a" stroke-width=".9"/>
 <!-- part studio tab -->
 <use href="#binfo2" x="427.2" y="896.2"/>
 <g fill="#fff" stroke="#333" stroke-width="1.25" stroke-linejoin="round">
  <path d="M439.2 893.4 Q439.2 892 440.6 892 H444.4 L446.6 894.4 V904.6 H441.8 L439.2 902.2 Z"/>
  <path d="M446.4 889.6 Q446.4 888.2 447.8 888.2 H451.8 L454.7 891 V904.6 H449.6 L446.4 901.8 Z"/>
 </g>
 <path d="M441.9 904 V894.7 H446 M439.8 892.8 L441.9 894.7 M449.7 904 V891.3 H454.2 M447 889 L449.7 891.3" fill="none" stroke="#8a8a8a" stroke-width=".8"/>
</svg>

<div id="bline" class="a"></div>

<span class="t" id="t_logo" style="left:34.7px;top:9.10px;font-size:17px;font-weight:400;color:#787878;transform:scaleX(0.9738)">onshape</span>
<span class="t" id="t_title" style="left:146.6px;top:8.10px;font-size:20px;font-weight:700;color:#2f2f2f;transform:scaleX(1.0037)">1B - Practice Exercise Solutions - Metric</span>
<span class="t" id="t_main" style="left:537.7px;top:13.35px;font-size:14.5px;font-weight:400;color:#999;transform:scaleX(1.0194)">Main</span>
<span class="t" id="t_share" style="left:1693px;top:11.05px;font-size:14.5px;font-weight:700;color:#fff;transform:scaleX(0.8400)">Share</span>
<span class="t" id="t_user" style="left:1820.0px;top:11.70px;font-size:14px;font-weight:400;color:#333;transform:scaleX(0.9091)">Harry Cassidy</span>
<span class="t" id="t_search" style="left:1394.3px;top:47.50px;font-size:13px;font-weight:400;color:#333;transform:scaleX(0.9723)">Search tools...</span>
<span class="t" id="t_alt" style="left:1481.8px;top:52.20px;font-size:9px;font-weight:400;color:#333;-webkit-text-stroke:.2px #333;transform:scaleX(1.1333)">alt/</span>
<span class="t" id="t_ckey" style="left:1514.8px;top:52.20px;font-size:9px;font-weight:400;color:#333;-webkit-text-stroke:.2px #333;transform:scaleX(0.9600)">c</span>
<span class="t" id="t_filter" style="left:79.6px;top:86.60px;font-size:13px;font-weight:400;color:#8a8a8a;font-style:italic;transform:scaleX(0.9206)">Filter by name or type</span>
<span class="t" id="t_features" style="left:40.5px;top:114.25px;font-size:13.5px;font-weight:400;color:#1c1c1c;-webkit-text-stroke:.3px #1c1c1c;transform:scaleX(0.9163)">Features (11)</span>
<span class="t" id="t_defgeo" style="left:58.4px;top:140.80px;font-size:13px;font-weight:400;color:#333;transform:scaleX(0.9657)">Default geometry</span>
<span class="t" id="t_origin" style="left:79.1px;top:164.80px;font-size:13px;font-weight:400;color:#333;transform:scaleX(0.9200)">Origin</span>
<span class="t" id="t_top" style="left:79.1px;top:188.60px;font-size:13px;font-weight:400;color:#333;transform:scaleX(0.9667)">Top</span>
<span class="t" id="t_front" style="left:79.1px;top:213.60px;font-size:13px;font-weight:400;color:#333;transform:scaleX(0.9867)">Front</span>
<span class="t" id="t_right" style="left:79.1px;top:237.90px;font-size:13px;font-weight:400;color:#333;transform:scaleX(0.9500)">Right</span>
<span class="t" id="t_layoutf" style="left:61.6px;top:262.40px;font-size:13px;font-weight:700;color:#222;transform:scaleX(0.9163)">Layout</span>
<span class="t" id="t_mp1" style="left:62.1px;top:286.80px;font-size:13px;font-weight:400;color:#9a9a9a;font-style:italic;transform:scaleX(0.9636)">Motor Plate</span>
<span class="t" id="t_mp2" style="left:62.1px;top:310.90px;font-size:13px;font-weight:400;color:#9a9a9a;font-style:italic;transform:scaleX(0.9636)">Motor Plate</span>
<span class="t" id="t_q1" style="left:63px;top:335.50px;font-size:13px;font-weight:400;color:#9a9a9a;font-style:italic;transform:scaleX(0.8429)">?</span>
<span class="t" id="t_op1" style="left:62.1px;top:360.00px;font-size:13px;font-weight:400;color:#9a9a9a;font-style:italic;transform:scaleX(0.9485)">Outer Plate</span>
<span class="t" id="t_op2" style="left:62.1px;top:384.00px;font-size:13px;font-weight:400;color:#9a9a9a;font-style:italic;transform:scaleX(0.9485)">Outer Plate</span>
<span class="t" id="t_q2" style="left:63px;top:408.70px;font-size:13px;font-weight:400;color:#9a9a9a;font-style:italic;transform:scaleX(0.8429)">?</span>
<span class="t" id="t_parts" style="left:57.9px;top:586.90px;font-size:13px;font-weight:400;color:#333;transform:scaleX(0.9500)">Parts (0)</span>
<span class="t" id="t_dlgtitle" style="left:235.3px;top:79.65px;font-size:13.5px;font-weight:400;color:#222;transform:scaleX(0.9122)">Layout</span>
<span class="t" id="t_skpl" style="left:237.7px;top:112.80px;font-size:10px;font-weight:400;color:#555;transform:scaleX(0.9448)">Sketch plane</span>
<span class="t" id="t_frpl" style="left:238.9px;top:127.95px;font-size:13.5px;font-weight:400;color:#555;transform:scaleX(0.9294)">Front plane</span>
<span class="t" id="t_cb1" style="left:249.1px;top:157.70px;font-size:13px;font-weight:400;color:#555;transform:scaleX(0.9631)">Disable imprinting</span>
<span class="t" id="t_cb2" style="left:249.1px;top:182.60px;font-size:13px;font-weight:400;color:#555;transform:scaleX(0.9525)">Show constraints</span>
<span class="t" id="t_cb3" style="left:249.1px;top:208.70px;font-size:13px;font-weight:400;color:#555;transform:scaleX(0.9283)">Show expressions</span>
<span class="t" id="t_cb4" style="left:249.1px;top:234.60px;font-size:13px;font-weight:400;color:#555;transform:scaleX(0.9471)">Show errors</span>
<span class="t" id="t_final" style="left:376.1px;top:261.60px;font-size:11px;font-weight:400;color:#222;transform:scaleX(1.0250)">Final</span>
<span class="t" id="t_cvlayout" style="left:530.5px;top:184.80px;font-size:17.8px;font-weight:400;color:#9cd2f1;-webkit-text-stroke:.3px #9cd2f1;transform:scaleX(1.0377)">Layout</span>
<span class="t" id="t_cvfront" style="left:854.1px;top:288.25px;font-size:18.3px;font-weight:400;color:#3560c2;-webkit-text-stroke:.25px #3560c2;transform:scaleX(1.0140)">Front</span>
<span class="t" id="t_d65" style="left:1116.8px;top:293.45px;font-size:15.3px;font-weight:400;color:#2e2e2e;transform:scaleX(1.0103)">Ø65</span>
<span class="t" id="t_d15" style="left:1051.2px;top:346.90px;font-size:15.4px;font-weight:400;color:#2e2e2e;transform:scaleX(1.0039)">Ø15.24</span>
<span class="t" id="t_d76" style="left:1120.0px;top:391.70px;font-size:15.4px;font-weight:400;color:#2e2e2e;transform:scaleX(1.0143)">Ø76.2</span>
<span class="t" id="t_vcfront" style="left:1821.0px;top:150.10px;font-size:12px;font-weight:400;color:#333;transform:scaleX(0.9571)">Front</span>
<span class="t" id="t_tab1" style="left:139.3px;top:888.50px;font-size:13px;font-weight:400;color:#666;transform:scaleX(0.9623)">Exercise 1</span>
<span class="t" id="t_tab2" style="left:268.4px;top:890.10px;font-size:13px;font-weight:400;color:#666;transform:scaleX(0.9967)">Exercise 1 Assembly</span>
<span class="t" id="t_tab3" style="left:457.5px;top:890.10px;font-size:13px;font-weight:400;color:#333;transform:scaleX(0.9860)">Exercise 1 Part Studio</span>
</body></html>
